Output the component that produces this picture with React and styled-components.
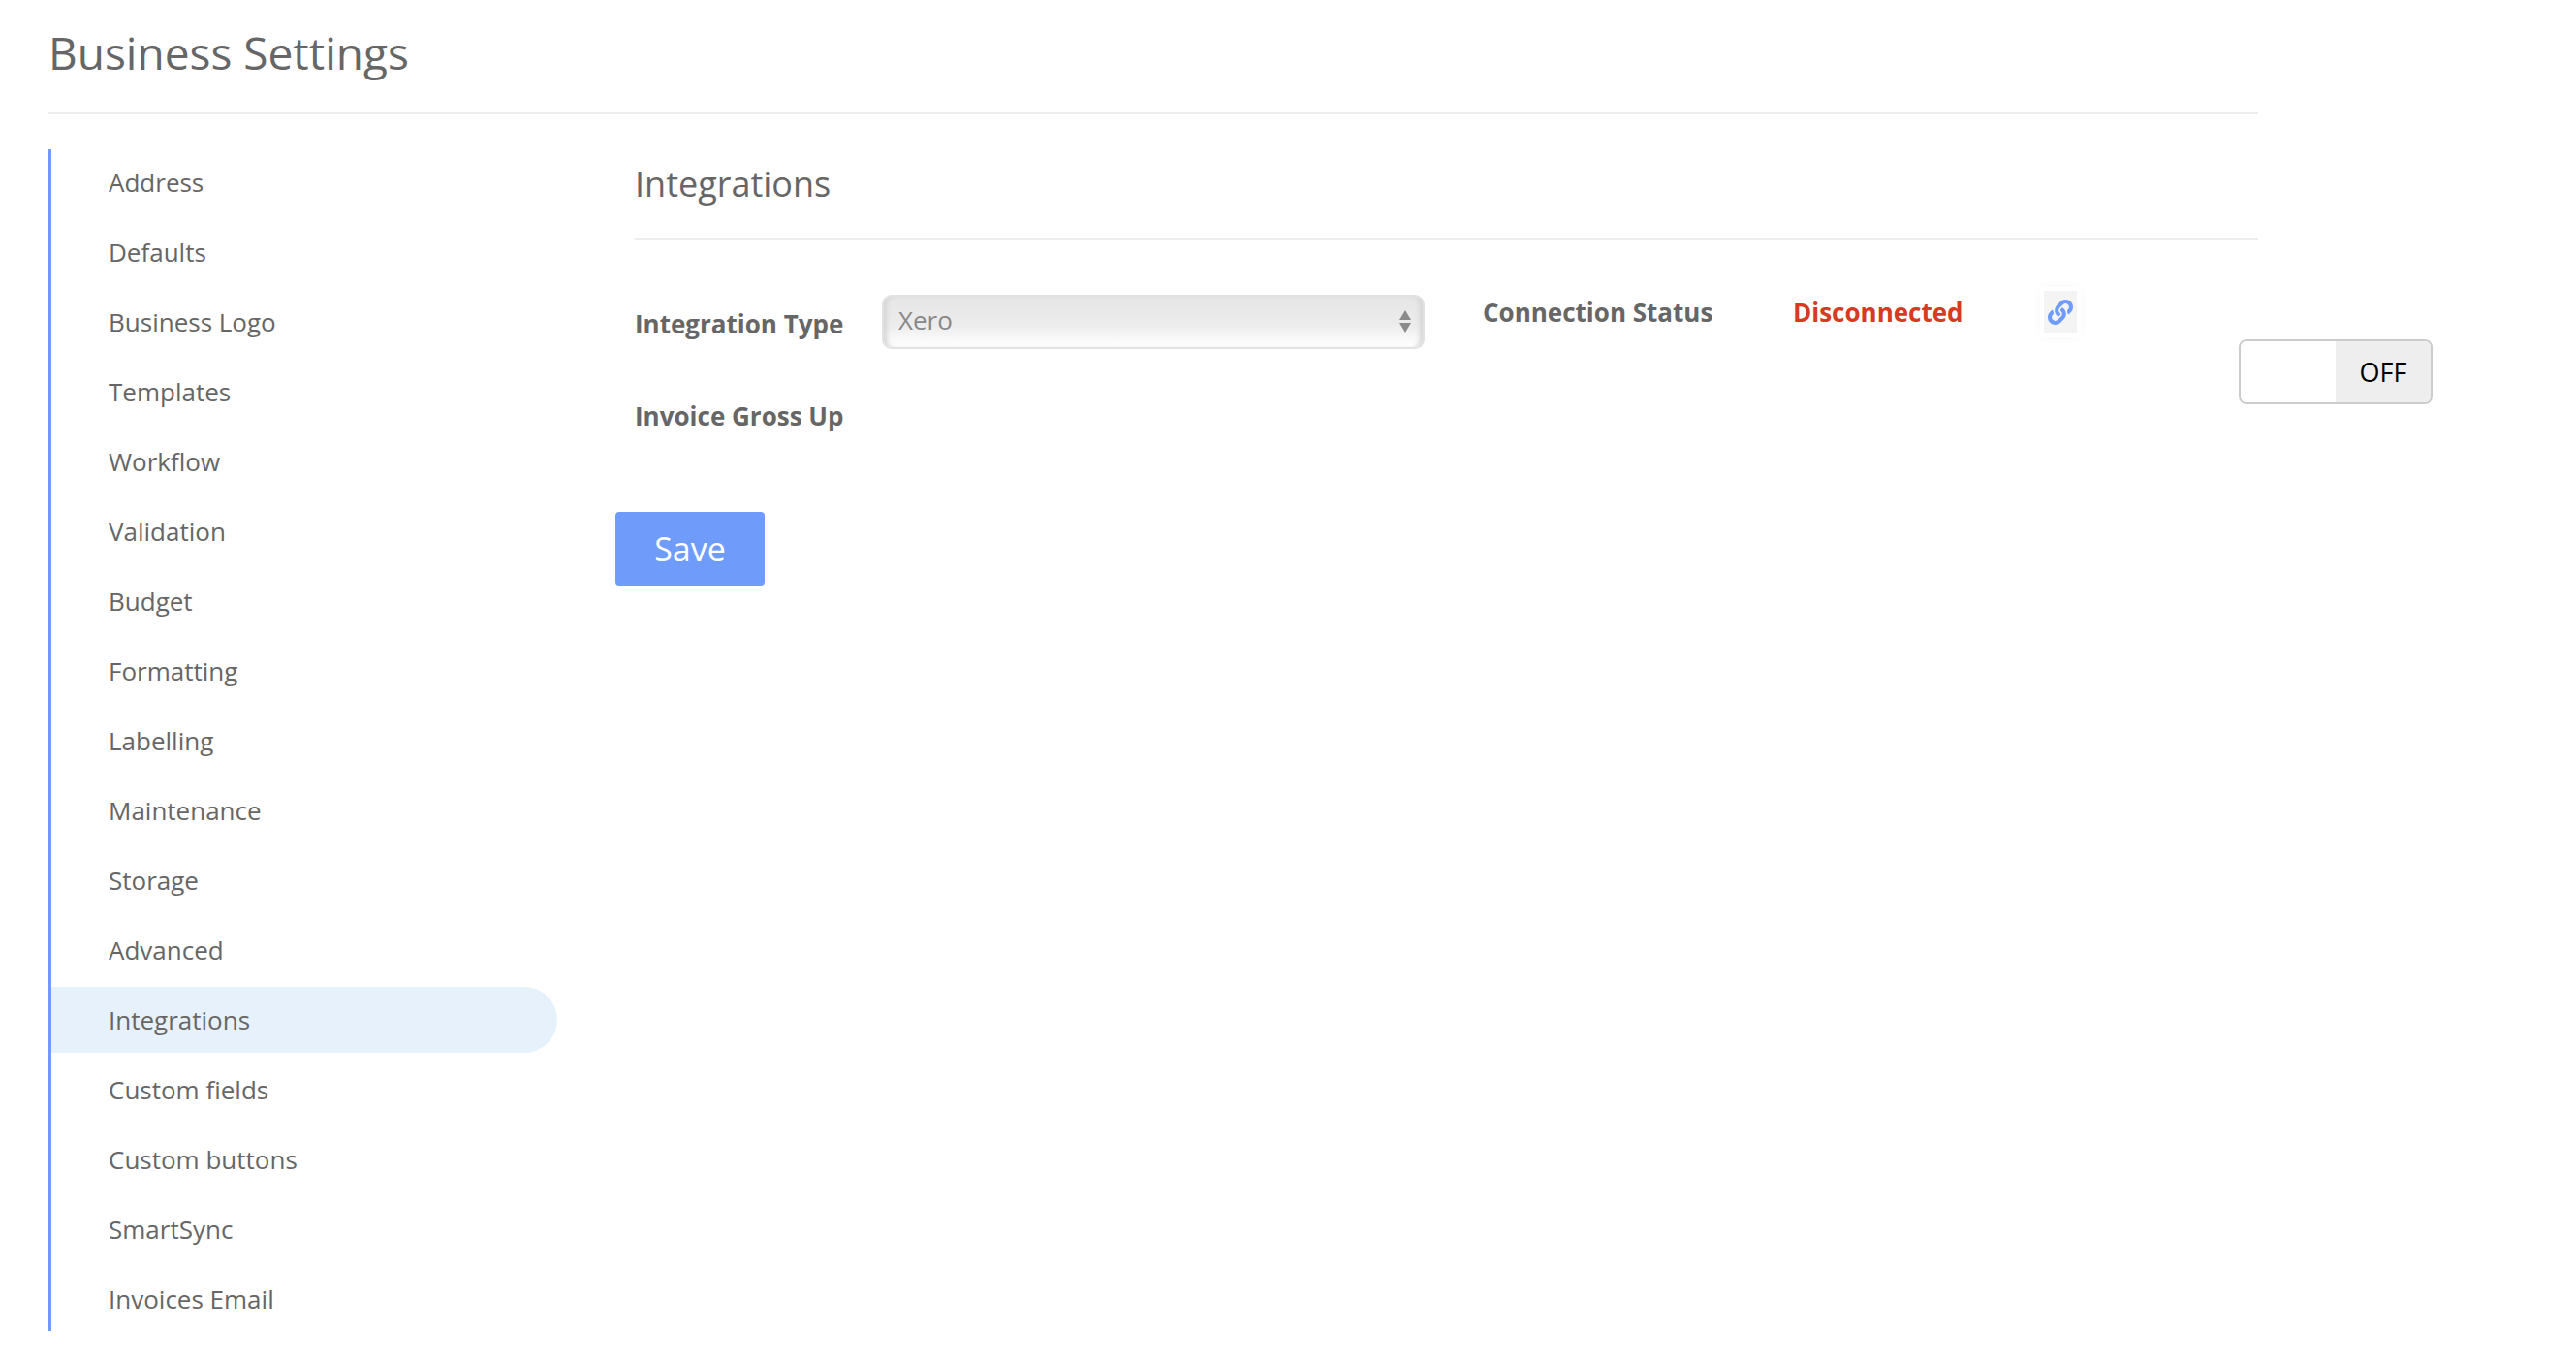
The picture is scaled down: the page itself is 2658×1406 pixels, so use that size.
import React from "react";
import styled, { createGlobalStyle } from "styled-components";
import { FaLink } from "react-icons/fa";

const GlobalStyle = createGlobalStyle`
  html, body {
    margin: 0;
    padding: 0;
    background: #fff;
    font-family: "Open Sans", "Liberation Sans", sans-serif;
    color: #666;
  }
  * { box-sizing: border-box; }
`;

const Page = styled.div`
  width: 2280px;
  margin-left: 50px;
  height: 1406px;
`;

const PageHeader = styled.header`
  height: 118px;
  border-bottom: 2px solid #eee;
  padding-top: 21px;
`;

const PageTitle = styled.h1`
  margin: 0;
  font-size: 46px;
  line-height: 66px;
  font-weight: 400;
  color: #666;
`;

const Columns = styled.div`
  display: flex;
  margin-top: 36px;
`;

const SideNav = styled.nav`
  width: 525px;
  flex: none;
  border-left: 3px solid #6f9cfa;
  height: 1219px;
`;

const NavItem = styled.a`
  display: flex;
  align-items: center;
  height: 68px;
  margin-bottom: 4px;
  padding-left: 59px;
  font-size: 26px;
  color: #666;
  background: ${(p) => (p.$active ? "#e6f1fc" : "transparent")};
  border-radius: 0 34px 34px 0;
`;

const Main = styled.main`
  flex: none;
  width: 1855px;
  margin-left: 80px;
`;

const SectionTitle = styled.h2`
  width: 1675px;
  height: 94px;
  margin: 0;
  padding-top: 10px;
  border-bottom: 2px solid #eee;
  font-size: 36px;
  line-height: 52px;
  font-weight: 400;
  color: #666;
`;

const FormArea = styled.div`
  display: flex;
  align-items: flex-start;
`;

const FormRows = styled.div`
  width: 1655px;
  flex: none;
  padding: 56px 0 64px;
`;

const SelectRow = styled.div`
  display: flex;
  align-items: center;
  height: 56px;
`;

const GrossUpRow = styled.div`
  display: flex;
  align-items: center;
  height: 70px;
  margin-top: 34px;
`;

const Label = styled.label`
  flex: none;
  width: ${(p) => p.$width};
  padding-top: ${(p) => p.$nudge || "0"};
  font-size: 26px;
  font-weight: 700;
  color: #666;
`;

const StatusGroup = styled.div`
  display: flex;
  align-items: center;
  align-self: flex-start;
  margin-left: 60px;
  height: 44px;
  margin-top: -4px;
`;

const SelectWrap = styled.div`
  position: relative;
  flex: none;
  width: 560px;
  height: 56px;
`;

const Select = styled.select`
  appearance: none;
  display: block;
  width: 100%;
  height: 100%;
  padding: 0 0 4px 15px;
  border: 2px solid #e2e2e2;
  border-radius: 10px;
  background: linear-gradient(#e6e6e6 0%, #ececec 55%, #fff 100%);
  box-shadow: inset 6px 0 5px -3px #d4d4d4, inset -6px 0 5px -3px #d4d4d4;
  font-family: inherit;
  font-size: 26px;
  color: #888;
`;

const SelectArrows = styled.svg`
  position: absolute;
  top: 16px;
  right: 14px;
  width: 12px;
  height: 23px;
  fill: #8a8a8a;
`;

const Status = styled.span`
  flex: none;
  width: 257px;
  font-size: 26px;
  font-weight: 700;
  color: #d63a20;
`;

const LinkButton = styled.button`
  flex: none;
  display: flex;
  align-items: center;
  justify-content: center;
  width: 42px;
  height: 52px;
  margin-left: -2px;
  padding: 0;
  border: 4px solid #fff;
  background: #f4f4f4;
  box-shadow: 0 0 10px rgba(0, 0, 0, 0.03);
  color: #6f9cfa;
  font-size: 26px;
`;

const Toggle = styled.div`
  flex: none;
  display: flex;
  width: 200px;
  height: 67px;
  margin-top: 102px;
  border: 2px solid #ccc;
  border-radius: 8px;
  overflow: hidden;
`;

const ToggleBlank = styled.span`
  width: 98px;
  background: #fff;
`;

const ToggleLabel = styled.span`
  flex: 1;
  display: flex;
  align-items: center;
  justify-content: center;
  background: #eee;
  font-size: 27px;
  color: #000;
`;

const SaveButton = styled.button`
  display: block;
  width: 154px;
  height: 76px;
  margin: 0 0 0 -20px;
  padding: 0;
  border: 0;
  border-radius: 4px;
  background: #6f9cfa;
  color: #fff;
  font-family: inherit;
  font-size: 34px;
`;

const sections = [
  "Address", "Defaults", "Business Logo", "Templates", "Workflow", "Validation",
  "Budget", "Formatting", "Labelling", "Maintenance", "Storage", "Advanced",
  "Integrations", "Custom fields", "Custom buttons", "SmartSync", "Invoices Email",
];

const App = () => (
  <Page>
    <GlobalStyle />
    <PageHeader>
      <PageTitle>Business Settings</PageTitle>
    </PageHeader>
    <Columns>
      <SideNav>
        {sections.map((s) => (
          <NavItem key={s} $active={s === "Integrations"}>{s}</NavItem>
        ))}
      </SideNav>
      <Main>
        <SectionTitle>Integrations</SectionTitle>
        <FormArea>
          <FormRows>
            <SelectRow>
              <Label $width="255px" $nudge="4px">Integration Type</Label>
              <SelectWrap>
                <Select defaultValue="Xero">
                  <option>Xero</option>
                </Select>
                <SelectArrows viewBox="0 0 12 23">
                  <path d="M6 0l6 10H0zM6 23l6-10H0z" />
                </SelectArrows>
              </SelectWrap>
              <StatusGroup>
                <Label $width="320px">Connection Status</Label>
                <Status>Disconnected</Status>
                <LinkButton><FaLink /></LinkButton>
              </StatusGroup>
            </SelectRow>
            <GrossUpRow>
              <Label $width="255px">Invoice Gross Up</Label>
            </GrossUpRow>
          </FormRows>
          <Toggle>
            <ToggleBlank />
            <ToggleLabel>OFF</ToggleLabel>
          </Toggle>
        </FormArea>
        <SaveButton>Save</SaveButton>
      </Main>
    </Columns>
  </Page>
);

export default App;
